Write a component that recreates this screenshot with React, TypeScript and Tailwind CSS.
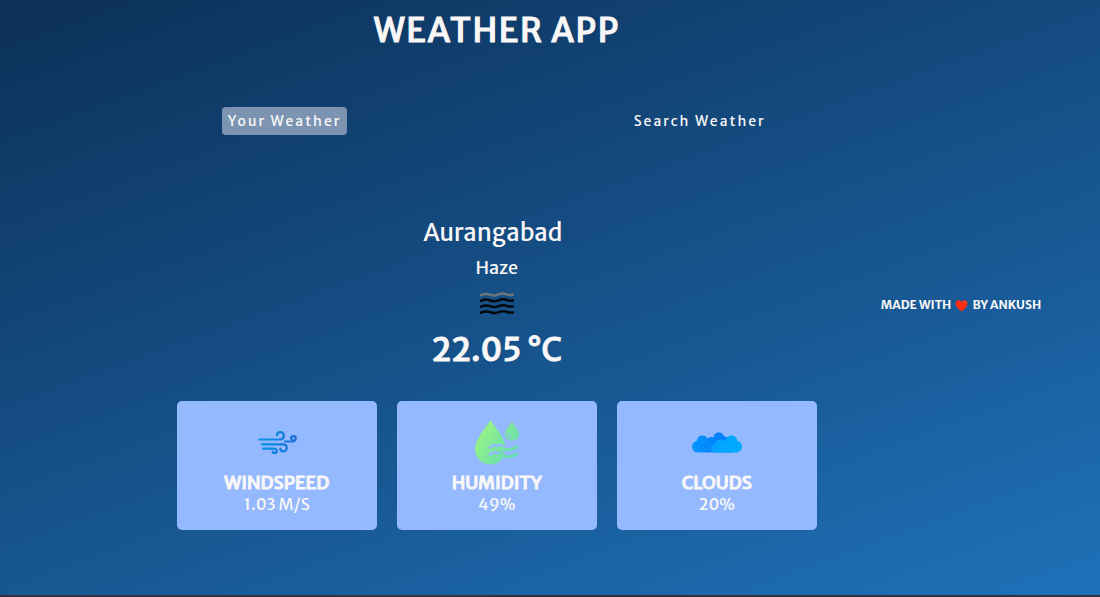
import React, { useState } from "react";

function WindIcon() {
  return (
    <svg viewBox="0 0 50 50" className="size-[50px]" fill="none" strokeWidth="2.2" strokeLinecap="round" aria-hidden="true">
      <defs>
        <linearGradient id="wind" x1="6" y1="0" x2="44" y2="0" gradientUnits="userSpaceOnUse">
          <stop offset="0" stopColor="#0796ec" />
          <stop offset="1" stopColor="#1b6fd8" />
        </linearGradient>
      </defs>
      <g stroke="url(#wind)">
        <path d="M7.200 22.500H27c3.200 0 4.800-1.800 4.800-3.800 0-2.200-1.600-3.500-3.600-3.500-2 0-3.200 1.400-3.200 3.100" />
        <path d="M33 24.500h6.500c2.700 0 4.200-1.500 4.200-3.200 0-1.300-1-2.100-2.300-2.100-1.400 0-2.300 1-2.300 2.200 0 .6.400 1 1 1" />
        <path d="M10 27.300h20.500c2.700 0 4.300 1.500 4.300 3.500 0 2-1.500 3.600-3.400 3.600-1.800 0-3-1.200-3-2.700" />
        <path d="M11 31.700h10.500c2 0 3.300 1.100 3.300 2.400 0 1.300-1 2.100-2.200 2.100-1.100 0-1.900-.7-1.900-1.700" />
      </g>
    </svg>
  );
}

function HumidityIcon() {
  return (
    <svg viewBox="0 0 50 50" className="size-[50px]" aria-hidden="true">
      <defs>
        <linearGradient id="drop" x1="4" y1="10" x2="46" y2="38" gradientUnits="userSpaceOnUse">
          <stop offset="0" stopColor="#9df57f" />
          <stop offset="1" stopColor="#62dcb4" />
        </linearGradient>
      </defs>
      <g fill="url(#drop)">
        <path d="M18.500 3C16 8 3 21.500 3 32.500 3 41 10 47.500 18.500 47.500S34 41 34 32.500C34 21.500 21 8 18.500 3Z" />
        <path d="M40 4.500c-1.500 3.500-7 8.200-7 12.500 0 3.800 3 6.700 7 6.700s7-2.900 7-6.700c0-4.300-5.500-9-7-12.500Z" />
      </g>
      <g fill="none" strokeLinecap="butt" strokeLinejoin="round">
        <path d="M35.500 16.500c.2 2 1.400 3.500 3.300 4" stroke="#94b9ff" strokeWidth="1.500" />
        <path d="M17 31c4.500-3.500 7.500-3.500 11.500-1s7 3.500 10 2M17 38c4.500-3.500 7.500-3.500 11.500-1s7 3.500 10 2" stroke="#94b9ff" strokeWidth="2.600" />
        <path d="M27 27c3 1 4 1.500 7 3.300M30 34c2 .5 3 1.500 5 2.500M30 41c2 .5 3 1.500 5 2" stroke="#94b9ff" strokeWidth="1.600" />
        <path d="M27 30c5 3 10 4.500 19-.5M27 37c5 3 10 4.500 19-.5" stroke="url(#drop)" strokeWidth="3" />
      </g>
    </svg>
  );
}

function CloudIcon() {
  return (
    <svg viewBox="0 0 50 50" className="size-[50px]" aria-hidden="true">
      <defs>
        <linearGradient id="cloudBack" x1="0" y1="0" x2="50" y2="0" gradientUnits="userSpaceOnUse">
          <stop offset="0" stopColor="#0797ff" />
          <stop offset=".6" stopColor="#007df8" />
          <stop offset="1" stopColor="#0797ff" />
        </linearGradient>
        <linearGradient id="cloudFront" x1="18" y1="0" x2="32" y2="0" gradientUnits="userSpaceOnUse">
          <stop offset="0" stopColor="#0799ff" />
          <stop offset="1" stopColor="#00a9ff" />
        </linearGradient>
      </defs>
      <path fill="url(#cloudBack)" d="M6 35.500c-3.500 0-6-2.700-6-6 0-3 2.100-5.300 5-5.800.1-3.200 2.400-5.200 5.300-5.200 2.200 0 4.200 1.200 5 3.100 1.500-1.500 4-2 6.200-1.200.1-3 2.400-5 5.300-5 2.700 0 4.800 1.700 5.300 4.200 2.400-.4 4.700.7 5.800 2.600L40 35.500Z" />
      <path fill="url(#cloudFront)" d="M23 35.500c-2.700 0-4.500-2-4.500-4.300 0-2.600 2-4.500 4.500-4.500.8-2.700 3-4.200 5.700-4.200 2 0 3.700.8 4.800 2.200.8-3.500 3-6.200 6-6.200 3.100 0 5.400 2.500 5.700 5.300 2.800.7 4.800 2.900 4.800 5.800 0 3.300-2.600 5.900-6 5.900Z" />
    </svg>
  );
}

function HazeIcon() {
  return (
    <svg viewBox="0 0 36 24" className="h-6 w-9" fill="none" strokeWidth="2.500" strokeLinecap="round" aria-hidden="true">
      <path stroke="#6d747c" d="M2 4.200c4-2 6-1.800 9-.5s5 1.200 8 0 6-1.500 8-.5 4 1.300 7 .5" />
      <g stroke="#05090e">
        <path d="M2 9.800c4-2 6-1.800 9-.5s5 1.300 8 .2 6-1.500 8-.8 4 1.300 7 .8" />
        <path d="M2 15.700c4-2 6-1.800 9-.5s5 1.300 8 .2 6-1.500 8-.8 4 1.300 7 .8" />
        <path d="M2 21.700c4-2 6-1.800 9-.5s5 1.300 8 .2 6-1.500 8-.8 4 1.300 7 .8" />
      </g>
    </svg>
  );
}

function Heart() {
  return (
    <svg viewBox="0 0 24 24" className="size-[13px]" role="img" aria-label="love">
      <path fill="#fb2c10" d="M12 23C8 20 1 14.500 1 8.500 1 5 3.500 2.500 6.700 2.500 9 2.500 11 3.700 12 5.700c1-2 3-3.200 5.300-3.200 3.200 0 5.700 2.500 5.700 6C23 14.500 16 20 12 23Z" />
      <path fill="#ff7a50" d="M15.500 6.500c2-2.500 5-1.500 5 1.500-1.500-1.500-3-2-5-1.500Z" />
    </svg>
  );
}

const stats = [
  { name: "WINDSPEED", value: "1.03 M/S", icon: <WindIcon /> },
  { name: "HUMIDITY", value: "49%", icon: <HumidityIcon /> },
  { name: "CLOUDS", value: "20%", icon: <CloudIcon /> },
];

const tabs = ["Your Weather", "Search Weather"];

export default function App() {
  const [active, setActive] = useState(tabs[0]);
  return (
    <div className="flex min-h-screen items-start justify-center gap-16 border-b-2 border-[#30303f] bg-[linear-gradient(160deg,#0c3057_0%,#1f71b9_100%)] pl-44 font-['Merriweather_Sans','Noto_Sans',sans-serif] text-[#f9f7f7]">
      <main className="w-full max-w-[640px] pb-16">
        <h1 className="pt-2 text-center text-[33px] leading-[46px] font-medium tracking-wider [-webkit-text-stroke:1px_currentColor]">WEATHER APP</h1>
        <nav className="mt-[53px] flex justify-between px-[45px]">
          {tabs.map((tab) => (
            <button
              key={tab}
              type="button"
              onClick={() => setActive(tab)}
              className={`rounded px-[6px] text-sm leading-7 font-medium tracking-[2px] ${active === tab ? "bg-[#7c94b2]" : ""}`}
            >
              {tab}
            </button>
          ))}
        </nav>
        <section className="mt-[78px] flex flex-col items-center">
          <h2 className="pr-2 text-2xl leading-10 font-medium">Aurangabad</h2>
          <p className="text-lg leading-[30px] font-medium">Haze</p>
          <div className="mt-2"><HazeIcon /></div>
          <p className="mt-3 text-[32px] leading-[46px] font-medium [-webkit-text-stroke:1px_currentColor]">22.05 °C</p>
        </section>
        <section className="mt-7 grid grid-cols-3 gap-5">
          {stats.map((s) => (
            <article key={s.name} className="flex flex-col items-center rounded-[5px] bg-[#94b9ff] py-4">
              {s.icon}
              <h3 className="mt-1 text-lg leading-6 font-medium [-webkit-text-stroke:1px_currentColor]">{s.name}</h3>
              <p className="text-base leading-[19px] font-medium">{s.value}</p>
            </article>
          ))}
        </section>
      </main>
      <footer className="mt-[295px] flex shrink-0 items-center gap-1 pr-[58px] text-xs leading-5 font-semibold">
        MADE WITH <Heart /> BY ANKUSH
      </footer>
    </div>
  );
}
